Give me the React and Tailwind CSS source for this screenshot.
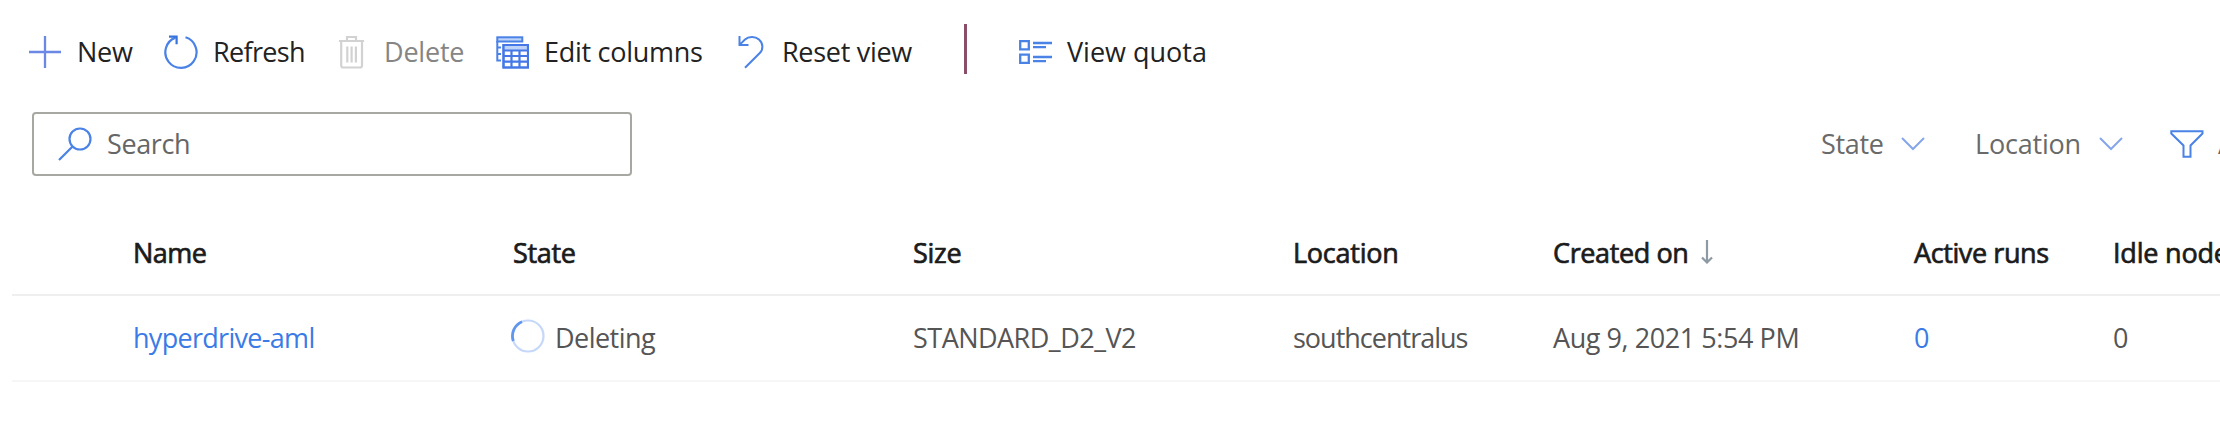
const BLUE = "#4a82e6";

function Svg({ w, h, children, stroke = BLUE, sw = 2 }) {
  return (
    <svg width={w} height={h} viewBox={`0 0 ${w} ${h}`} fill="none" stroke={stroke} strokeWidth={sw} className="shrink-0">
      {children}
    </svg>
  );
}

const PlusIcon = () => (
  <Svg w={32} h={32} stroke="#6a88e4" sw={2.3}>
    <path d="M16 0V32M0 16H32" />
  </Svg>
);

const RefreshIcon = () => (
  <Svg w={34} h={34} sw={2.2}>
    <path d="M21.500 2.300A15.600 15.600 0 1 1 11.500 2.600" />
    <path d="M5 1.600H12.600V9.200" stroke="#3873dc" />
  </Svg>
);

const TrashIcon = () => (
  <Svg w={36} h={34} stroke="#d2d2d2" sw={2.2}>
    <path d="M1 6H26M9 5.500V2H18V5.500M3.200 6V30.500Q3.200 32.500 5.200 32.500H22Q24 32.500 24 30.500V6M9.300 11.500V27.500M13.600 11.500V27.500M17.900 11.500V27.500" />
  </Svg>
);

const ColumnsIcon = () => (
  <Svg w={33} h={34}>
    <rect x="1.300" y="2.300" width="25" height="4.200" fill="#bdd3f8" />
    <path d="M1.300 6V25.500H5M2 12.500H5M2 19H5" />
    <rect x="7.500" y="10" width="24.500" height="22.500" fill="#fff" />
    <rect x="8.500" y="11" width="22.500" height="4" fill="#bdd3f8" stroke="none" />
    <path d="M7.500 10H32V32.500H7.500ZM7.500 15.500H32M7.500 21H32M7.500 26.700H32M15.500 15.500V32.500M23.500 15.500V32.500" stroke="#4578e6" strokeWidth="2.2" />
  </Svg>
);

const UndoIcon = () => (
  <Svg w={26} h={34}>
    <path d="M1.500 1V10H10.500M1.800 9.600L7 4.500C10.500 1.200 17 0.900 21 4.500C25.500 8.500 25.300 14.500 21.800 18L7 32.800" />
  </Svg>
);

const QuotaIcon = () => (
  <Svg w={33} h={24} sw={2.3}>
    <path d="M1.200 1.200H9.800V9.300H1.200ZM1.200 14.700H9.800V22.800H1.200Z" />
    <path d="M14 3H33M14 7.200H27M14 17H33M14 21.200H27" />
  </Svg>
);

const SearchIcon = () => (
  <Svg w={34} h={34} sw={2.2}>
    <circle cx="22" cy="12" r="10.500" />
    <path d="M14.300 19.700L1 33" />
  </Svg>
);

const ChevronIcon = () => (
  <Svg w={24} h={14} stroke="#86a6ec">
    <path d="M1 1L12 12L23 1" />
  </Svg>
);

const FunnelIcon = () => (
  <Svg w={34} h={28}>
    <path d="M1.300 1.200H32.500V3.500L20.500 15.500V26.800H13.500V15.500L1.300 3.500Z" />
  </Svg>
);

const Spinner = () => (
  <Svg w={34} h={34} stroke="#c6d8fa" sw={2.2}>
    <circle cx="17" cy="17" r="15.500" />
    <path d="M2.300 22A15.500 15.500 0 0 1 11 2.700" stroke="#6096ee" strokeWidth="2.8" />
  </Svg>
);

const ArrowDown = () => (
  <Svg w={12} h={24} stroke="#8d99a3" sw={2.2}>
    <path d="M6 0V22.500M1 17.500L6 22.500L11 17.500" />
  </Svg>
);

const Tool = ({ icon, label, width, slot, text = "" }) => (
  <button className={`flex items-center shrink-0 text-left ${width}`}>
    <span className={`flex shrink-0 ${slot}`}>{icon}</span>
    <span className={text}>{label}</span>
  </button>
);

const Head = ({ children, className = "" }) => (
  <div className={`[-webkit-text-stroke:0.7px_#1b1b1b] text-[#1b1b1b] ${className}`}>{children}</div>
);

const GRID = "grid grid-cols-[380px_400px_380px_260px_361px_199px_200px] items-center ml-3 pl-[121px] whitespace-nowrap";

export default function App() {
  return (
    <div className="w-[2220px] h-[426px] overflow-hidden bg-white font-['Open_Sans',sans-serif] text-[27px] leading-9 whitespace-nowrap text-[#555]">
      <div className="flex items-center h-[104px] pl-[29px] text-[#222]">
        <Tool icon={<PlusIcon />} label="New" width="w-[135px]" slot="w-12" text="tracking-[-0.25px]" />
        <Tool icon={<RefreshIcon />} label="Refresh" width="w-[174px]" slot="w-[49px]" text="tracking-[-0.66px]" />
        <Tool icon={<TrashIcon />} label="Delete" width="w-[158px]" slot="w-[46px]" text="tracking-[-0.2px] text-[#858585]" />
        <Tool icon={<ColumnsIcon />} label="Edit columns" width="w-[242px]" slot="w-12" text="tracking-[-0.28px]" />
        <Tool icon={<UndoIcon />} label="Reset view" width="w-[226px]" slot="w-11" text="tracking-[-0.3px]" />
        <div className="h-[50px] w-[3px] mr-[52px] -mt-1.5 bg-[#8a4d6a]" />
        <Tool icon={<QuotaIcon />} label="View quota" width="w-[200px]" slot="w-[48px]" />
      </div>

      <div className="flex items-center h-20 pl-8">
        <div className="flex items-center shrink-0 w-[600px] h-16 border-2 border-[#a8a8a2] rounded pl-6 text-[#666]">
          <SearchIcon />
          <span className="ml-[15px] tracking-[-0.39px]">Search</span>
        </div>
        <div className="flex items-center shrink-0 ml-[1189px] text-[#6a6a6a]">
          <span className="w-20 tracking-[-0.3px]">State</span>
          <ChevronIcon />
          <span className="ml-[50px] w-[124px] tracking-[-0.2px]">Location</span>
          <ChevronIcon />
          <span className="ml-[47px] w-[48px]"><FunnelIcon /></span>
          <span>All filters</span>
        </div>
      </div>

      <div className={`${GRID} h-[112px] pt-[27px] border-b-2 border-[#efefef]`}>
        <Head className="tracking-[-0.5px]">Name</Head>
        <Head className="tracking-[-0.3px]">State</Head>
        <Head className="tracking-[-0.3px]">Size</Head>
        <Head className="tracking-[-0.25px]">Location</Head>
        <Head className="flex items-center tracking-[-0.38px]">Created on<span className="ml-3 -mt-0.5"><ArrowDown /></span></Head>
        <Head className="tracking-[-0.4px]">Active runs</Head>
        <Head className="tracking-[-0.2px]">Idle nodes</Head>
      </div>

      <div className={`${GRID} h-[86px] border-b-2 border-[#f6f6f6]`}>
        <a className="text-[#3b7be6] tracking-[-0.7px]">hyperdrive-aml</a>
        <div className="flex items-center"><span className="-ml-0.5 mr-[10px] -mt-1"><Spinner /></span><span className="tracking-[-0.53px]">Deleting</span></div>
        <div className="tracking-[-0.52px]">STANDARD_D2_V2</div>
        <div className="tracking-[-1px]">southcentralus</div>
        <div className="tracking-[-0.43px]">Aug 9, 2021 5:54 PM</div>
        <a className="text-[#3b7be6]">0</a>
        <div>0</div>
      </div>
    </div>
  );
}
